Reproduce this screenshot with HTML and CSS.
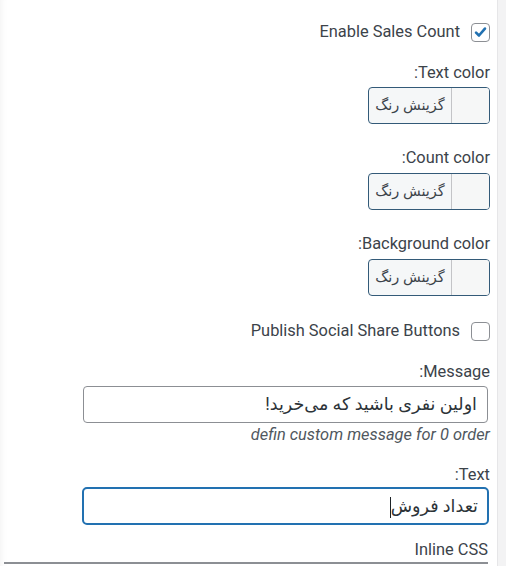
FILE: index.html
```html
<!DOCTYPE html>
<html lang="fa" dir="rtl">
<head>
<meta charset="UTF-8">
<meta name="viewport" content="width=device-width, initial-scale=1">
<title>تنظیمات شمارنده فروش</title>
<link rel="stylesheet" href="styles.css">
</head>
<body>
<div class="panel">

  <label class="check-row">
    <span class="checkbox checked">
      <svg viewBox="0 0 18 18" width="18" height="18"><path d="M4.3 9.6l3.1 3.1 6.3-7.3" fill="none" stroke="#2271b1" stroke-width="2.8" stroke-linecap="round" stroke-linejoin="round"/></svg>
    </span>
    <span>Enable Sales Count</span>
  </label>

  <div class="field first">
    <div class="label">Text color:</div>
    <button class="color-btn" type="button"><span class="swatch"></span><span class="pick">گزینش رنگ</span></button>
  </div>

  <div class="field">
    <div class="label">Count color:</div>
    <button class="color-btn" type="button"><span class="swatch"></span><span class="pick">گزینش رنگ</span></button>
  </div>

  <div class="field">
    <div class="label">Background color:</div>
    <button class="color-btn" type="button"><span class="swatch"></span><span class="pick">گزینش رنگ</span></button>
  </div>

  <label class="check-row">
    <span class="checkbox"></span>
    <span>Publish Social Share Buttons</span>
  </label>

  <div class="field msg">
    <div class="label">Message:</div>
    <div class="text-input">اولین نفری باشید که می‌خرید!</div>
    <div class="desc">defin custom message for 0 order</div>
  </div>

  <div class="field count-text">
    <div class="label">Text:</div>
    <div class="text-input focused">تعداد فروش<span class="caret"></span></div>
  </div>

  <div class="field css">
    <div class="label">Inline CSS</div>
    <div class="css-box"></div>
  </div>

</div>
</body>
</html>
```

FILE: styles.css
```css
/* 設定パネル */
:root {
  --text-color: #3c434a;
  --accent-color: #2271b1;
  --border-color: #8c8f94;
}

body {
  margin: 0;
  background: #f3f3f4;
  font-family: Roboto, "DejaVu Sans", sans-serif;
  color: var(--text-color);
  font-size: 16.4px;
  overflow: hidden;
}

.panel {
  width: 490px;
  height: 566px;
  box-sizing: content-box;
  padding: 1px 7px 0 0;
  margin-right: auto;
  background: #fff;
  border-right: 1px solid #e6e6e8;
  box-shadow: inset 8px 0 8px -8px rgba(0,0,0,0.07);
}

.check-row {
  display: flex;
  align-items: center;
  gap: 11px;
  height: 20px;
  line-height: 20px;
  margin-top: 21px;
}

.checkbox {
  width: 19px;
  height: 19px;
  box-sizing: border-box;
  border: 1px solid var(--border-color);
  border-radius: 4px;
  background: #fff;
  display: flex;
  align-items: center;
  justify-content: center;
}

.checkbox svg {
  display: block;
}

.label {
  line-height: 20px;
  height: 20px;
  margin-bottom: 5px;
}

.field.first .label {
  margin-top: 1px;
  margin-bottom: 4px;
}

.color-btn {
  display: flex;
  width: 122px;
  height: 37px;
  padding: 0;
  border: 1px solid #335a78;
  border-radius: 4px;
  background: #f5f7f8;
  font: inherit;
  color: var(--text-color);
  cursor: pointer;
  overflow: hidden;
}

.swatch {
  width: 37px;
  height: 100%;
  border-left: 1px solid #c3c4c7;
  background: #f6f7f7;
}

.pick {
  flex: 1;
  line-height: 35px;
  font-size: 14.5px;
  text-align: center;
}

.check-row + .field {
  margin-top: 21px;
}

.field + .field {
  margin-top: 24px;
}

.field + .check-row {
  margin-top: 25px;
}

.text-input {
  width: 405px;
  height: 37px;
  box-sizing: border-box;
  border: 1px solid var(--border-color);
  border-radius: 4px;
  padding: 0 10px;
  line-height: 35px;
  font-size: 17.5px;
  color: #2c3338;
  margin-right: 2px;
}

.field.msg .text-input {
  margin-top: -1px;
}

.text-input.focused {
  width: 407px;
  height: 38px;
  margin-right: 1px;
  border: 2px solid var(--accent-color);
  border-radius: 5px;
  line-height: 34px;
  padding: 0 9px;
}

.caret {
  display: inline-block;
  width: 1px;
  height: 21px;
  background: #1d2327;
  vertical-align: middle;
}

.desc {
  font-style: italic;
  line-height: 20px;
  margin-top: 2px;
  color: #50575e;
}

.field.msg + .field {
  margin-top: 20px;
}

.field.count-text .label {
  margin-bottom: 2px;
}

.field.css {
  margin-top: 15px;
}

.field.css .label {
  margin-right: 2px;
  margin-bottom: 2px;
}

.css-box {
  width: 484px;
  height: 10px;
  margin-right: 2px;
  border-top: 2px solid #8c8f94;
}
```
